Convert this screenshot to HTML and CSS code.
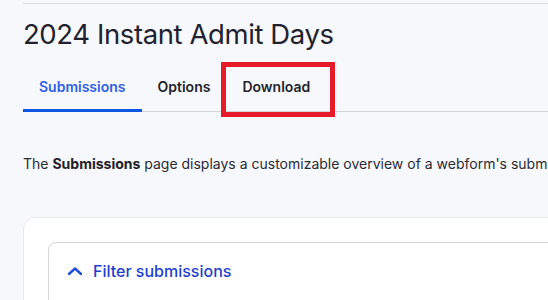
FILE: index.html
```html
<!DOCTYPE html>
<html lang="en">
<head>
    <meta charset="UTF-8">
    <meta name="viewport" content="width=device-width, initial-scale=1.0">
    <title>2024 Instant Admit Days - Submissions</title>
    <link rel="stylesheet" href="styles.css">
</head>
<body>
    <div class="page">
        <div class="topline"></div>
        <h1 class="title">2024 Instant Admit Days</h1>
        <nav class="tabs">
            <ul>
                <li class="active"><a href="#">Submissions</a></li>
                <li><a href="#">Options</a></li>
                <li class="marked"><a href="#">Download</a></li>
            </ul>
        </nav>

        <p class="intro">The <strong>Submissions</strong> page displays a customizable overview of a webform's submissions.</p>

        <section class="card">
            <div class="filter">
                <div class="filter-head">
                    <svg class="chevron" width="16" height="10" viewBox="0 0 16 10">
                        <path d="M2 8 L8 2.5 L14 8" fill="none" stroke="currentColor" stroke-width="2.4" stroke-linecap="round" stroke-linejoin="round"/>
                    </svg>
                    <span>Filter submissions</span>
                </div>
            </div>
        </section>
    </div>
</body>
</html>
```

FILE: styles.css
```css
body {
    font-family: Inter, "Noto Sans", sans-serif;
    background-color: #f7f8fc;
    color: #232429;
    margin: 0;
    padding: 0;
    overflow: hidden;
}
.page {
    width: 720px;
    padding: 3px 0 0 23px;
}
.topline {
    height: 1px;
    background: #dddee4;
}
.title {
    font-size: 27.5px;
    font-weight: 400;
    line-height: 34px;
    color: #22222f;
    margin: 13px 0 0 0;
    letter-spacing: -0.4px;
}
.tabs ul {
    list-style: none;
    margin: 14px 0 0 0;
    padding: 0;
    display: flex;
    border-bottom: 1px solid #d4d5da;
}
.tabs li {
    position: relative;
    margin-bottom: -1px;
}
.tabs a {
    display: block;
    padding: 12px 16px 12px 16px;
    border-bottom: 3px solid transparent;
    font-size: 14px;
    line-height: 20px;
    font-weight: 560;
    color: #232429;
    text-decoration: none;
}
.tabs li.active a {
    color: #2f5ee6;
    border-bottom-color: #0b57e3;
}
.tabs li.marked::after {
    content: "";
    position: absolute;
    left: -5px;
    top: -3px;
    width: 104px;
    height: 45px;
    border: 5px solid #e61b2a;
    pointer-events: none;
}
.intro {
    font-size: 14px;
    line-height: 20px;
    margin: 42px 0 0 0;
    white-space: nowrap;
    color: #2a2b33;
}
.intro strong {
    font-weight: 700;
    color: #1f2026;
}
.card {
    margin-top: 43px;
    background: #fff;
    border: 1px solid #e8e9ee;
    border-radius: 12px;
    padding: 24px;
}
.filter {
    border: 1px solid #d6d7dc;
    border-radius: 8px;
    padding: 16px 18px 40px 18px;
}
.filter-head {
    display: flex;
    align-items: center;
    gap: 10px;
    font-size: 16px;
    line-height: 24px;
    font-weight: 500;
    color: #1d3fcf;
}
.chevron {
    color: #1d4fd8;
}
```
